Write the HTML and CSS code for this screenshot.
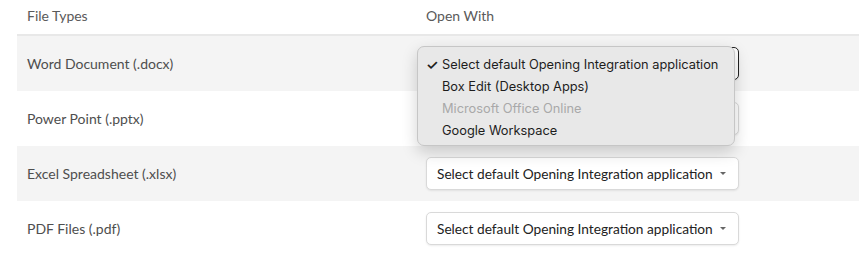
FILE: index.html
```html
<!DOCTYPE html>
<html lang="en">
<head>
    <meta charset="UTF-8">
    <title>Open With Settings</title>
    <link rel="stylesheet" href="styles.css">
</head>
<body>

<div class="types-table">
    <div class="types-row types-head">
        <div class="cell-name">File Types</div>
        <div class="cell-app">Open With</div>
    </div>

    <div class="types-row shaded">
        <div class="cell-name">Word Document (.docx)</div>
        <div class="cell-app">
            <div class="app-select focused">
                <span>Select default Opening Integration application</span>
                <span class="caret"></span>
            </div>
            <ul class="app-menu">
                <li class="checked"><span class="check">&#10003;</span>Select default Opening Integration application</li>
                <li>Box Edit (Desktop Apps)</li>
                <li class="disabled">Microsoft Office Online</li>
                <li>Google Workspace</li>
            </ul>
        </div>
    </div>

    <div class="types-row">
        <div class="cell-name">Power Point (.pptx)</div>
        <div class="cell-app">
            <div class="app-select">
                <span>Select default Opening Integration application</span>
                <span class="caret"></span>
            </div>
        </div>
    </div>

    <div class="types-row shaded">
        <div class="cell-name">Excel Spreadsheet (.xlsx)</div>
        <div class="cell-app">
            <div class="app-select">
                <span>Select default Opening Integration application</span>
                <span class="caret"></span>
            </div>
        </div>
    </div>

    <div class="types-row">
        <div class="cell-name">PDF Files (.pdf)</div>
        <div class="cell-app">
            <div class="app-select">
                <span>Select default Opening Integration application</span>
                <span class="caret"></span>
            </div>
        </div>
    </div>
</div>

</body>
</html>
```

FILE: styles.css
```css
* {
    margin: 0;
    padding: 0;
    box-sizing: border-box;
}
body {
    font-family: Lato, 'Open Sans', sans-serif;
    background-color: #fff;
    color: #4e4e4e;
    font-size: 14px;
}
.types-table {
    margin-left: 17px;
}
.types-row {
    display: grid;
    grid-template-columns: 409px 1fr;
    align-items: center;
    height: 55px;
}
.types-row.shaded {
    background-color: #f4f4f4;
}
.types-head {
    height: 36px;
    padding-bottom: 4px;
    border-bottom: 2px solid #e8e8e8;
    color: #5a5a5a;
}
.cell-name {
    padding-left: 10px;
}
.cell-app {
    position: relative;
}
.app-select {
    width: 313px;
    height: 33px;
    display: flex;
    align-items: center;
    justify-content: space-between;
    padding: 0 12px 0 10px;
    background-color: #fff;
    border: 1px solid #d9d9d9;
    border-radius: 5px;
    box-shadow: 0 1px 2px rgba(0, 0, 0, 0.08);
    color: #222;
    font-size: 13.7px;
}
.app-select.focused {
    border: 1.5px solid #222;
}
.caret {
    width: 0;
    height: 0;
    border-left: 3px solid transparent;
    border-right: 3px solid transparent;
    border-top: 3px solid #666;
}
.app-menu {
    position: absolute;
    z-index: 10;
    left: -9px;
    top: -1px;
    width: 318px;
    height: 100px;
    list-style: none;
    padding: 7px 0;
    background-color: #e8e8e8;
    border: 1px solid #c6c6c6;
    border-radius: 7px;
    box-shadow: 0 6px 16px rgba(0, 0, 0, 0.18);
    font-family: Inter, 'Liberation Sans', sans-serif;
    font-size: 12.8px;
    color: #1d1d1d;
}
.app-menu li {
    height: 22px;
    line-height: 22px;
    padding-left: 24px;
    position: relative;
}
.app-menu li.disabled {
    color: #a9a9a9;
}
.app-menu .check {
    position: absolute;
    left: 8px;
    font-size: 14px;
    font-weight: 600;
}
```
